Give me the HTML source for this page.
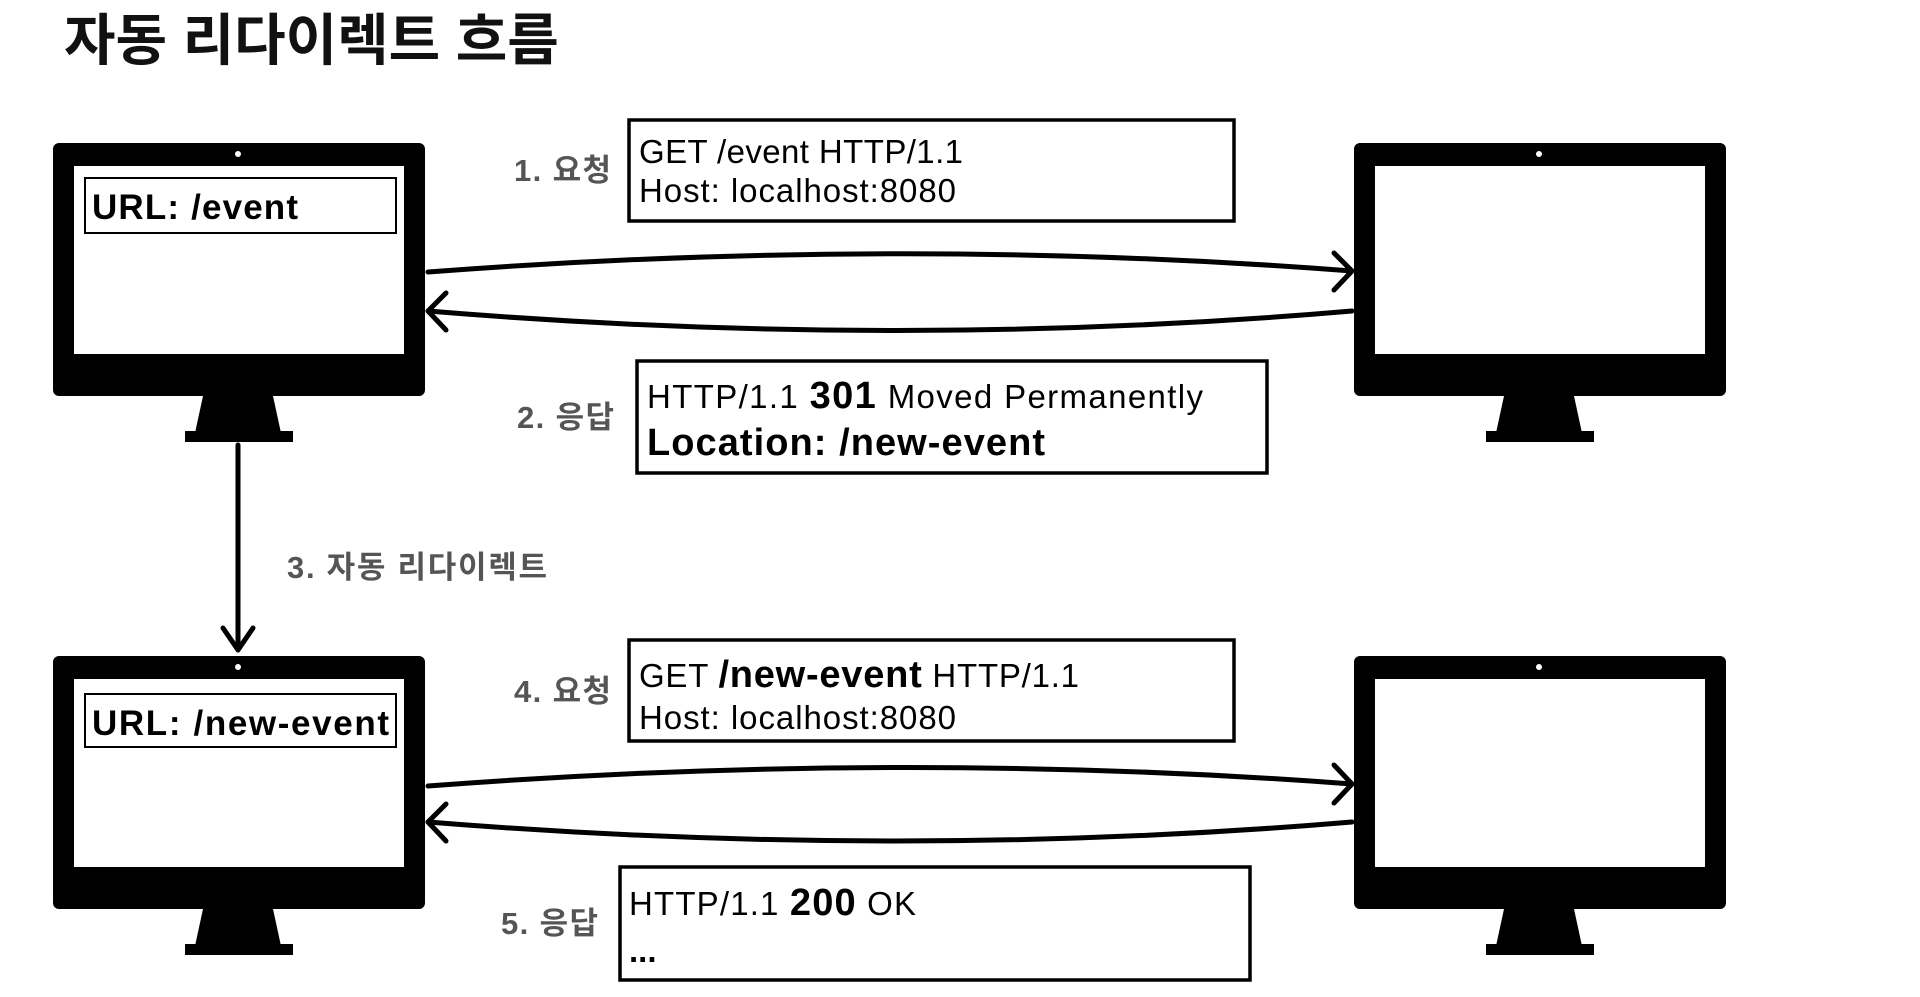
<!DOCTYPE html>
<html><head><meta charset="utf-8"><style>
html,body{margin:0;padding:0;background:#fff;width:1920px;height:997px;overflow:hidden}
svg{display:block}
text{font-family:"Liberation Sans","Noto Sans CJK KR",sans-serif}
</style></head><body>
<svg width="1920" height="997" viewBox="0 0 1920 997" xmlns="http://www.w3.org/2000/svg">
<defs>
<g id="mon">
<rect x="0" y="0" width="372" height="253" rx="6" fill="#000"/>
<rect x="21" y="23" width="330" height="188" fill="#fff"/>
<circle cx="185" cy="11" r="3" fill="#fff"/>
<polygon points="150,253 220,253 228,290 142,290" fill="#000"/>
<rect x="132" y="288" width="108" height="11" fill="#000"/>
</g>
</defs>
<text x="64" y="60" font-size="56" font-weight="bold" fill="#111">자동 리다이렉트 흐름</text>

<use href="#mon" x="53" y="143"/>
<use href="#mon" x="1360" y="143" transform="translate(-6,0)"/>
<use href="#mon" x="53" y="656"/>
<use href="#mon" x="1360" y="656" transform="translate(-6,0)"/>

<rect x="85" y="178" width="311" height="55" fill="none" stroke="#000" stroke-width="2"/>
<text x="92" y="219" font-size="35" font-weight="bold" textLength="206">URL: /event</text>
<rect x="85" y="694" width="311" height="53" fill="none" stroke="#000" stroke-width="2"/>
<text x="92" y="735" font-size="35" font-weight="bold" textLength="297">URL: /new-event</text>

<g fill="none" stroke="#000" stroke-width="3.5">
<rect x="629" y="120" width="605" height="101"/>
<rect x="637" y="361" width="630" height="112"/>
<rect x="629" y="640" width="605" height="101"/>
<rect x="620" y="867" width="630" height="113"/>
</g>
<g font-size="33" fill="#000">
<text x="639" y="163" textLength="324">GET /event HTTP/1.1</text>
<text x="639" y="202" textLength="317">Host: localhost:8080</text>
<text x="647" y="408" textLength="556">HTTP/1.1 <tspan font-weight="bold" font-size="38">301</tspan> Moved Permanently</text>
<text x="647" y="455" font-weight="bold" font-size="38" textLength="398">Location: /new-event</text>
<text x="639" y="687" textLength="440">GET <tspan font-weight="bold" font-size="38">/new-event</tspan> HTTP/1.1</text>
<text x="639" y="729" textLength="317">Host: localhost:8080</text>
<text x="629" y="915" textLength="287">HTTP/1.1 <tspan font-weight="bold" font-size="38">200</tspan> OK</text>
<text x="629" y="962" font-weight="bold">...</text>
</g>
<g font-size="31" font-weight="bold" fill="#555">
<text x="514" y="181" textLength="97">1. 요청</text>
<text x="517" y="428" textLength="97">2. 응답</text>
<text x="287" y="578" textLength="260">3. 자동 리다이렉트</text>
<text x="514" y="702" textLength="97">4. 요청</text>
<text x="501" y="934" textLength="97">5. 응답</text>
</g>
<g fill="none" stroke="#000" stroke-width="5" stroke-linecap="round" stroke-linejoin="round">
<path d="M428 272 Q900 236 1352 271"/>
<path d="M1334 253 L1352 271 L1334 290"/>
<path d="M1352 311 Q900 350 428 311"/>
<path d="M446 293 L428 311 L446 330"/>
<path d="M428 786 Q900 750 1352 784"/>
<path d="M1334 765 L1352 784 L1334 803"/>
<path d="M1352 822 Q900 860 428 822"/>
<path d="M446 804 L428 822 L446 841"/>
<path d="M238 445 L238 648"/>
<path d="M223 628 L238 650 L253 628"/>
</g>
</svg>
</body></html>
